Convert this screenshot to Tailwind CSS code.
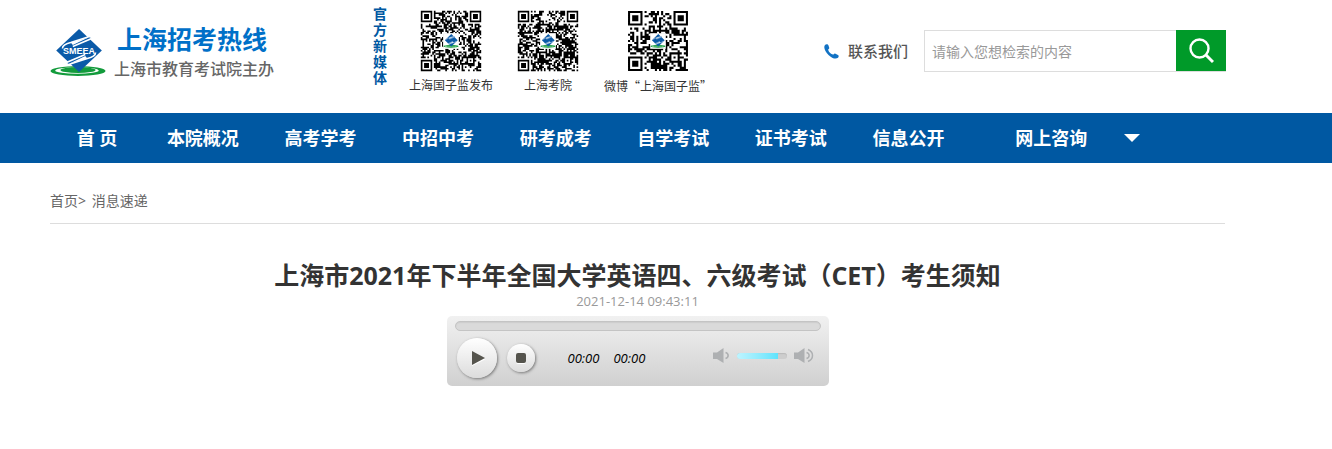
<!DOCTYPE html>
<html lang="zh-CN">
<head>
<meta charset="utf-8">
<title>上海招考热线</title>
<script src="https://cdn.jsdelivr.net/npm/@tailwindcss/browser@4"></script>
</head>
<body class="bg-white font-['Open_Sans','Noto_Sans_CJK_SC',sans-serif] text-[#333]">
<svg class="hidden">
  <symbol id="emblem" viewBox="0 0 54 50">
    <ellipse cx="27" cy="43" rx="26.500" ry="5" fill="#139b3c"/>
    <ellipse cx="26" cy="42.500" rx="21" ry="3.200" fill="#fff"/>
    <ellipse cx="27" cy="42" rx="17" ry="3" fill="#139b3c"/>
    <path d="M28 1L50 22.500L28 44L6 22.500Z" fill="#0a5aa8"/>
    <path d="M12 20.500C12 17 16 15.500 20 14.500L38 8.500C40 8.500 40.500 10 39 11L22 18.500" fill="#0a5aa8" stroke="#fff" stroke-width="1.500"/>
    <path d="M20 14.500L37 9.500L22 17Z" fill="#fff"/>
    <path d="M44 24.500C44 28 40 29.500 36 30.500L18 36.500C16 36.500 15.500 35 17 34L34 26.500" fill="#0a5aa8" stroke="#fff" stroke-width="1.500"/>
    <path d="M36 30.500L19 35.500L34 28Z" fill="#fff"/>
  </symbol>
</svg>

<header class="mr-[106px] ml-[50px] flex h-[113px] items-start">
  <a href="#" class="flex w-[323px] items-center pt-[23px]" aria-label="上海招考热线">
    <span class="relative block h-[54px] w-[56px] shrink-0">
      <svg class="mt-[2px] h-[50px] w-[56px]" viewBox="0 0 54 50" preserveAspectRatio="none"><use href="#emblem"/></svg>
      <span class="absolute top-[20px] left-[1px] w-[56px] text-center font-['Liberation_Sans'] text-[9px] leading-[10px] font-bold text-white">SMEEA</span>
    </span>
    <span class="ml-2 block whitespace-nowrap">
      <span class="block pl-[3px] text-[25px] leading-[32px] font-bold text-[#0070c8]">上海招考热线</span>
      <span class="block text-[16px] leading-[28px] font-medium text-[#666]">上海市教育考试院主办</span>
    </span>
  </a>
  <p class="w-[15px] pt-[6px] text-[14px] leading-[16px] font-bold text-[#0058a2]">官方新媒体</p>
  <ul class="flex pt-[10px] text-[12px] leading-[18px] whitespace-nowrap">
    <li class="ml-[20px] w-[86px] text-center"><svg class="qr mx-auto block size-[62px]" data-size="37" data-seed="7"></svg><span class="mt-[5px] block">上海国子监发布</span></li>
    <li class="ml-[11px] w-[86px] text-center"><svg class="qr mx-auto block size-[62px]" data-size="37" data-seed="91"></svg><span class="mt-[5px] block">上海考院</span></li>
    <li class="ml-[12px] w-[110px] text-center"><svg class="qr mx-auto block size-[62px]" data-size="29" data-seed="43"></svg><span class="mt-[5px] block font-['Noto_Sans_CJK_SC',sans-serif]">微博“上海国子监”</span></li>
  </ul>
  <div class="ml-auto flex items-center pt-[30px]">
    <a href="#" class="mr-[16px] flex items-center text-[15px] font-medium text-[#555]">
      <svg class="mr-[9px] size-[15px]" viewBox="0 0 15 15"><path d="M1 1C2 0 4 0 4.500 1.500L5.300 4C5.400 5 4 5.300 4.200 6C5 8.500 7 10 9 10.500C9.800 10.700 10 9.300 11 9.500L14 11C15 11.800 14.800 13 14 13.800C12 15.500 8 14.500 4.500 11C1 7.500-.8 3.500 1 1Z" fill="#1272c4"/></svg>
      联系我们
    </a>
    <form class="flex h-[42px] w-[302px] border border-[#ddd]">
      <input type="text" aria-label="检索" placeholder="请输入您想检索的内容" class="min-w-0 flex-1 px-[7px] text-[14px] outline-none placeholder:text-[#999]">
      <button type="button" aria-label="搜索" class="-mt-px -mr-px flex h-[41px] w-[50px] items-center justify-center bg-[#009a29]">
        <svg class="size-[26px]" viewBox="0 0 26 26" fill="none" stroke="#fff"><circle cx="11.500" cy="10.500" r="9" stroke-width="2.400"/><path d="M18 17L25 24" stroke-width="3"/></svg>
      </button>
    </form>
  </div>
</header>

<nav class="bg-[#0058a2]">
  <div class="mr-[106px] ml-[50px] flex h-[50px] items-center text-center text-[18px] font-bold whitespace-nowrap text-white">
    <a href="#" class="w-[8%]">首 页</a>
    <a href="#" class="w-[10%]">本院概况</a>
    <a href="#" class="w-[10%]">高考学考</a>
    <a href="#" class="w-[10%]">中招中考</a>
    <a href="#" class="w-[10%]">研考成考</a>
    <a href="#" class="w-[10%]">自学考试</a>
    <a href="#" class="w-[10%]">证书考试</a>
    <a href="#" class="w-[10%]">信息公开</a>
    <a href="#" class="ml-[48px]">网上咨询</a>
    <button type="button" aria-label="更多" class="ml-[37px]"><svg class="h-[8px] w-[16px]" viewBox="0 0 16 8"><path d="M0 0H16L8 8Z" fill="#fff"/></svg></button>
  </div>
</nav>

<main class="mr-[107px] ml-[50px]">
  <div class="border-b border-[#ddd] pt-[27px] pb-[11px] text-[14px] leading-[22px] text-[#666]"><a href="#">首页</a>&gt; <a href="#" class="ml-[2px]">消息速递</a></div>
  <h1 class="mt-[33px] text-center text-[25px] leading-[36px] font-bold whitespace-nowrap">上海市2021年下半年全国大学英语四、六级考试（CET）考生须知</h1>
  <p class="text-center text-[13px] leading-[16px] text-[#999]">2021-12-14 09:43:11</p>
  <section aria-label="播放器" class="mx-auto mt-[7px] h-[70px] w-[382px] rounded-[5px] bg-linear-to-b from-[#f1f1f1] to-[#d0d0d0] px-[8px] pt-[5px]">
    <div class="h-[10px] rounded-full border border-[#c4c4c4] bg-[#dadada] shadow-[inset_0_1px_1px_#ccc]"></div>
    <div class="flex items-center pt-[7px] pl-[2px]">
      <button type="button" aria-label="播放" class="flex size-[40px] items-center justify-center rounded-full bg-linear-to-b from-white to-[#dcdcdc] shadow-[1px_1px_3px_#777]">
        <svg class="ml-[3px] h-[15px] w-[13px]" viewBox="0 0 13 15"><path d="M0 1.500L13 8.500L0 15Z" fill="#fff"/><path d="M0 0L13 7L0 14Z" fill="#55544d"/></svg>
      </button>
      <button type="button" aria-label="停止" class="ml-[10px] flex size-[28px] items-center justify-center rounded-full bg-linear-to-b from-white to-[#dcdcdc] shadow-[1px_1px_3px_#777]">
        <span class="size-[10px] rounded-[2px] bg-[#55544d] shadow-[0_1px_0_#fff]"></span>
      </button>
      <span class="ml-[33px] text-[13px] leading-[16px] text-black italic">00:00</span>
      <span class="ml-[14px] text-[13px] leading-[16px] text-black italic">00:00</span>
      <div class="mr-[7px] mb-[4px] ml-auto flex items-center">
        <svg class="h-[16px] w-[17px]" viewBox="0 0 17 16"><path d="M0 4.500H4L10.500 0V15L4 11H0Z" fill="#aeb0b2"/><path d="M12.500 4.500C16 5.500 16 9.500 12.500 10.500" fill="none" stroke="#aeb0b2" stroke-width="1.600"/></svg>
        <div class="mx-[7px] h-[6px] w-[50px] overflow-hidden rounded-[3px] bg-[#cdcdcd] shadow-[inset_0_1px_1px_#bbb]"><div class="h-full w-[82%] bg-linear-to-r from-[#bdf4ff] to-[#5ce3fc]"></div></div>
        <svg class="h-[16px] w-[20px]" viewBox="0 0 20 16"><path d="M0 4.500H4L10.500 0V15L4 11H0Z" fill="#aeb0b2"/><path d="M12.500 4.500C16 5.500 16 9.500 12.500 10.500M14 1.500C20 4 20 11 14 13.500" fill="none" stroke="#aeb0b2" stroke-width="1.500"/></svg>
      </div>
    </div>
  </section>
</main>

<script>
// Fills each code with finder squares, a data field and the centre emblem.
document.querySelectorAll('.qr').forEach(function (svg) {
  var n = +svg.dataset.size, seed = +svg.dataset.seed, d = '';
  function rnd() { seed = (seed * 16807 + 11) % 2147483647; return seed / 2147483647; }
  for (var i = 0; i < 20; i++) rnd();
  function finder(x, y) {
    var m = Math.max(Math.abs(x - 3), Math.abs(y - 3));
    return m === 3 || m < 2;
  }
  for (var y = 0; y < n; y++) for (var x = 0; x < n; x++) {
    var on = rnd() < 0.52, r = n - 8;
    if (x < 8 && y < 8) on = x < 7 && y < 7 && finder(x, y);
    else if (x >= r && y < 8) on = x > r && y < 7 && finder(x - r - 1, y);
    else if (x < 8 && y >= r) on = x < 7 && y > r && finder(x, y - r - 1);
    else if (x >= n - 9 && x < n - 4 && y >= n - 9 && y < n - 4) {
      var m = Math.max(Math.abs(x - n + 7), Math.abs(y - n + 7));
      on = m !== 1;
    }
    if (on) d += 'M' + x + ' ' + y + 'h1v1h-1z';
  }
  svg.setAttribute('viewBox', '-0.5 -0.5 ' + (n + 1) + ' ' + (n + 1));
  var c = n * 0.37, w = n * 0.26;
  svg.innerHTML = '<path d="' + d + '" fill="#000"/>' +
    '<rect x="' + c + '" y="' + c + '" width="' + w + '" height="' + w + '" fill="#fff"/>' +
    '<use href="#emblem" x="' + c + '" y="' + c + '" width="' + w + '" height="' + w + '"/>';
});
</script>
</body>
</html>
